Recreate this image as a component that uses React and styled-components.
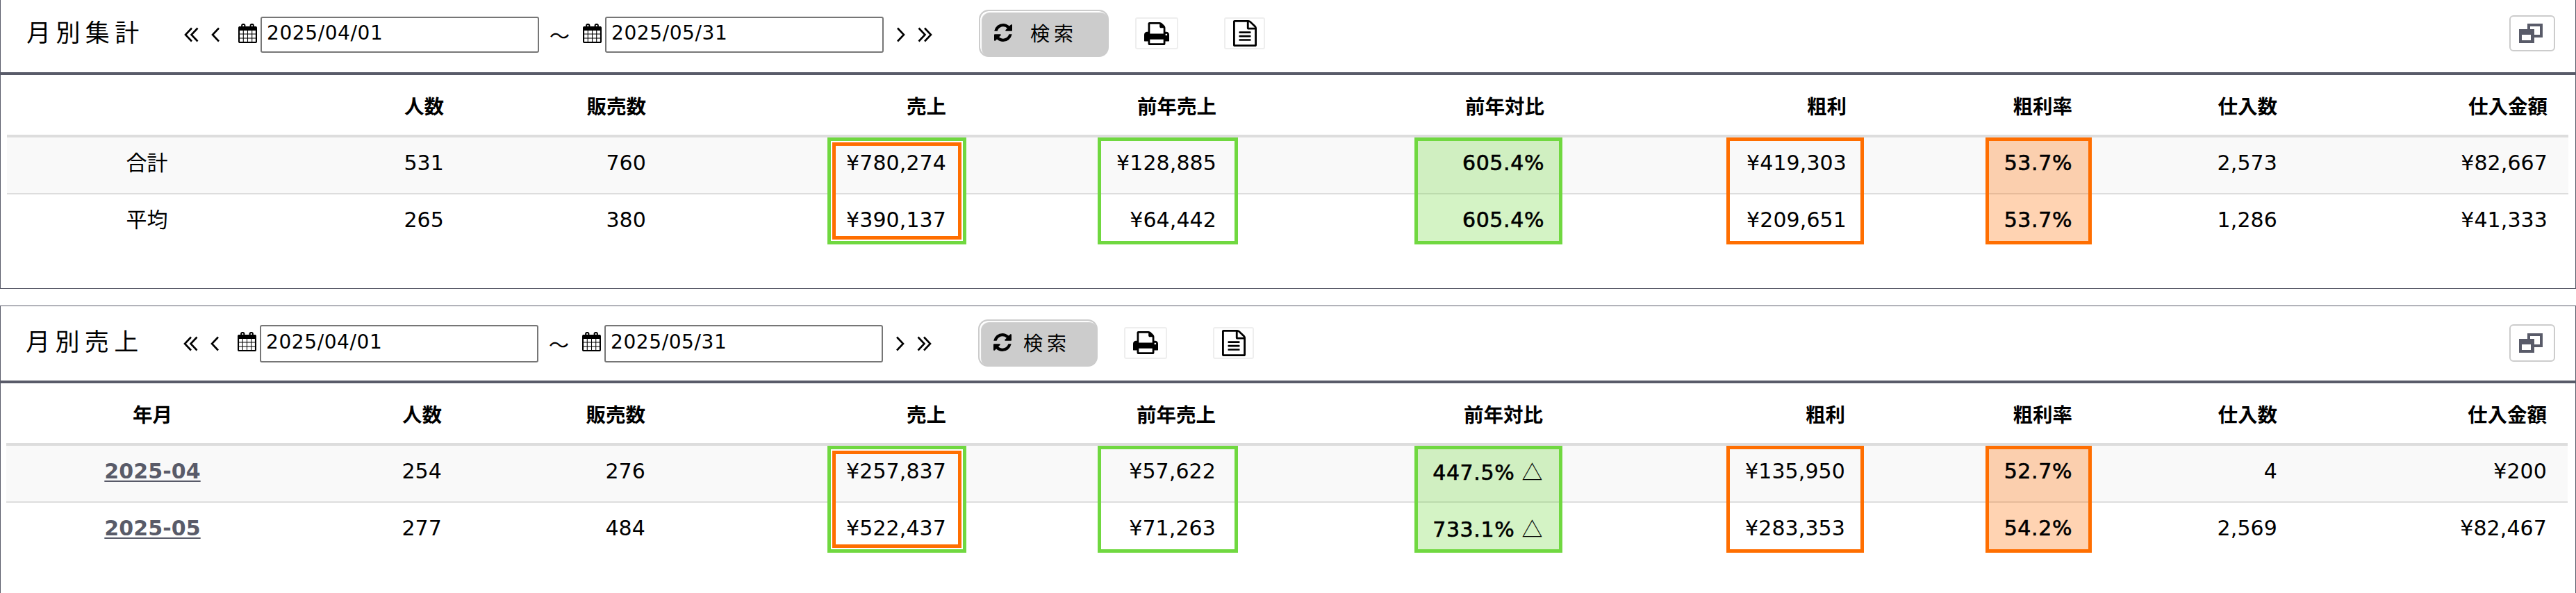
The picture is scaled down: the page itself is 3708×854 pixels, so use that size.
import React from 'react';
import styled, { createGlobalStyle } from 'styled-components';

const GlobalStyle = createGlobalStyle`
  * {
    box-sizing: border-box;
  }

  body {
    margin: 0;
    background: #fff;
    color: #000;
    font-family: 'DejaVu Sans', 'Noto Sans CJK JP', sans-serif;
    overflow: hidden;
  }
`;

const Page = styled.main`
  display: flex;
  flex-direction: column;
  gap: 24px;
  height: 854px;
  overflow: hidden;
`;

const Panel = styled.section`
  flex: none;
  height: ${({ $first }) => ($first ? '416px' : '440px')};
  border: 1px solid #595b69;
  ${({ $first }) => $first && 'border-top: none;'}
`;

const Toolbar = styled.header`
  display: flex;
  align-items: center;
  height: ${({ $first }) => ($first ? '108px' : '111px')};
  padding: 0 29px ${({ $first }) => ($first ? '8px' : '2px')} ${({ $first }) => ($first ? '37px' : '36px')};
  border-bottom: 4px solid #595b69;
`;

const Title = styled.h2`
  flex: none;
  width: 227px;
  margin: 0;
  padding-bottom: 7px;
  font-family: 'Noto Sans CJK JP', sans-serif;
  font-size: 35px;
  font-weight: 400;
  letter-spacing: 7.4px;
  line-height: 40px;
  white-space: nowrap;
`;

const DateGroup = styled.div`
  display: flex;
  align-items: center;
  flex: none;
  margin-top: ${({ $first }) => ($first ? '4px' : '2px')};
`;

const ArrowPair = styled.div`
  display: flex;
  gap: 18px;
  margin: ${({ $after }) => ($after ? '0 0 0 19px' : '0 27px 0 0')};
`;

const DateField = styled.label`
  display: flex;
  align-items: center;
  gap: 5px;

  svg {
    margin-bottom: 5px;
  }
`;

const DateInput = styled.input`
  width: 401px;
  height: ${({ $first }) => ($first ? '52px' : '54px')};
  padding: 0 7px 5px;
  border: 2px solid #767676;
  border-radius: 3px;
  background: #fff;
  color: #000;
  font: 28px 'DejaVu Sans', sans-serif;
  letter-spacing: 0.6px;
  outline: none;
`;

const Tilde = styled.span`
  width: 63px;
  padding-right: 4px;
  font-family: 'Noto Sans CJK JP', sans-serif;
  font-size: 29px;
  line-height: 40px;
  text-align: center;
`;

const SearchButton = styled.button`
  display: flex;
  align-items: center;
  flex: none;
  gap: ${({ $first }) => ($first ? '26px' : '17px')};
  width: ${({ $first }) => ($first ? '187px' : '172px')};
  height: 68px;
  margin-left: 67px;
  padding: 0 0 2px 20px;
  border: 2px solid #ccc;
  border-radius: 14px;
  background: #ccc;
  box-shadow: inset 2px 2px 1px #fff;
  color: #000;
  font-family: 'Noto Sans CJK JP', sans-serif;
  font-size: 28px;
  letter-spacing: 6px;
  line-height: 36px;
  white-space: nowrap;
`;

const ToolButton = styled.button`
  display: flex;
  align-items: center;
  justify-content: center;
  flex: none;
  width: ${({ $width }) => $width}px;
  height: 46px;
  margin-left: ${({ $gap }) => $gap}px;
  padding: 0;
  border: 2px solid #eee;
  border-radius: 3px;
  background: #fff;
  color: #000;
`;

const WindowButton = styled(ToolButton)`
  height: ${({ $first }) => ($first ? '52px' : '54px')};
  margin-left: auto;
  padding-right: 4px;
  border-color: #ccc;
  border-radius: 6px;
`;

const Body = styled.div`
  position: relative;
`;

const Table = styled.table`
  width: 3687px;
  margin-left: ${({ $first }) => ($first ? '9px' : '8px')};
  border-collapse: separate;
  border-spacing: 0;
  table-layout: fixed;
`;

const HeadCell = styled.th`
  height: 90px;
  padding: 1px 30px 0 0;
  border-bottom: 4px solid #ddd;
  font-family: 'Noto Sans CJK JP', sans-serif;
  font-size: 28.5px;
  font-weight: 700;
  line-height: 34px;
  text-align: right;

  &:first-child {
    padding-right: 0;
    text-align: center;
  }
`;

const Row = styled.tr`
  background: ${({ $striped }) => ($striped ? '#f9f9f9' : '#fff')};
`;

const Cell = styled.td`
  height: ${({ $last }) => ($last ? '80px' : '82px')};
  padding: 0 30px 6px 0;
  border-bottom: ${({ $last }) => ($last ? 'none' : '2px solid #ddd')};
  font-size: 30px;
  letter-spacing: 0.1px;
  line-height: 36px;
  text-align: right;
  white-space: nowrap;

  &:first-child {
    padding-right: 0;
    text-align: center;
  }
`;

// Sits above the tinted highlight frames
const Value = styled.span`
  position: relative;
  z-index: 2;
  ${({ $strong }) => $strong && '-webkit-text-stroke: 0.6px #000; letter-spacing: 0.6px;'}
`;

const Triangle = styled.span`
  font-family: 'Noto Sans CJK JP', sans-serif;
  -webkit-text-stroke: 0;
`;

const MonthLink = styled.a`
  color: #595b69;
  font-weight: 700;
  text-decoration: underline;
  text-decoration-thickness: 2px;
  text-underline-offset: 3px;
`;

const Highlight = styled.div`
  position: absolute;
  z-index: 1;
  top: ${({ $inner }) => ($inner ? '97px' : '90px')};
  left: ${({ $left }) => $left}px;
  width: ${({ $width }) => $width}px;
  height: ${({ $inner }) => ($inner ? '140px' : '154px')};
  border: 5px solid ${({ $color }) => ($color === 'green' ? '#70d840' : '#ff6e00')};
  box-shadow: ${({ $inner }) => ($inner ? '0 0 0 2px #fff' : 'none')};
  background: ${({ $fill, $color }) => {
    if (!$fill) return 'transparent';
    return $color === 'green' ? 'rgba(112, 216, 64, 0.3)' : 'rgba(255, 110, 0, 0.3)';
  }};
  background-clip: padding-box;
`;

const highlights = [
  { left: 1190, width: 200, color: 'green' },
  { left: 1197, width: 186, color: 'orange', inner: true },
  { left: 1579, width: 202, color: 'green' },
  { left: 2035, width: 213, color: 'green', fill: true },
  { left: 2484, width: 198, color: 'orange' },
  { left: 2857, width: 153, color: 'orange', fill: true },
];

const headings = ['人数', '販売数', '売上', '前年売上', '前年対比', '粗利', '粗利率', '仕入数', '仕入金額'];

const summary = {
  first: true,
  title: '月別集計',
  columns: [403, 256, 291, 432, 389, 472, 435, 325, 295, 389],
  headings: ['', ...headings],
  rows: [
    ['合計', '531', '760', '¥780,274', '¥128,885', '605.4%', '¥419,303', '53.7%', '2,573', '¥82,667'],
    ['平均', '265', '380', '¥390,137', '¥64,442', '605.4%', '¥209,651', '53.7%', '1,286', '¥41,333'],
  ],
};

const sales = {
  first: false,
  title: '月別売上',
  columns: [421, 236, 293, 433, 388, 471, 435, 327, 295, 388],
  headings: ['年月', ...headings],
  rows: [
    ['2025-04', '254', '276', '¥257,837', '¥57,622', '447.5% △', '¥135,950', '52.7%', '4', '¥200'],
    ['2025-05', '277', '484', '¥522,437', '¥71,263', '733.1% △', '¥283,353', '54.2%', '2,569', '¥82,467'],
  ],
};

const AngleIcon = ({ double, right }) => (
  <svg
    width={double ? 21 : 12}
    height="22"
    viewBox={double ? '0 0 21 22' : '0 0 12 22'}
    fill="none"
    stroke="currentColor"
    strokeWidth="2.6"
    transform={right ? 'scale(-1 1)' : undefined}
  >
    <path d="M11 1.5 2 11l9 9.5" />
    {double && <path d="M19.5 1.5 10.5 11l9 9.5" />}
  </svg>
);

const CalendarIcon = () => (
  <svg width="27" height="28" viewBox="64 0 1664 1792" preserveAspectRatio="none" fill="currentColor">
    <path d="M192 1664h288v-288h-288v288zm352 0h320v-288h-320v288zm-352-352h288v-320h-288v320zm352 0h320v-320h-320v320zm-352-384h288v-288h-288v288zm736 736h320v-288h-320v288zm-384-736h320v-288h-320v288zm768 736h288v-288h-288v288zm-384-352h320v-320h-320v320zm-352-864v-288q0-13-9.5-22.5t-22.5-9.5h-64q-13 0-22.5 9.5t-9.5 22.5v288q0 13 9.5 22.5t22.5 9.5h64q13 0 22.5-9.5t9.5-22.5zm736 864h288v-320h-288v320zm-384-384h320v-288h-320v288zm384 0h288v-288h-288v288zm32-480v-288q0-13-9.5-22.5t-22.5-9.5h-64q-13 0-22.5 9.5t-9.5 22.5v288q0 13 9.5 22.5t22.5 9.5h64q13 0 22.5-9.5t9.5-22.5zm384-64v1280q0 52-38 90t-90 38h-1408q-52 0-90-38t-38-90v-1280q0-52 38-90t90-38h128v-96q0-66 47-113t113-47h64q66 0 113 47t47 113v96h384v-96q0-66 47-113t113-47h64q66 0 113 47t47 113v96h128q52 0 90 38t38 90z" />
    <path d="M128 256h1536v384H128z" />
  </svg>
);

const RefreshIcon = () => (
  <svg width="26" height="26" viewBox="128 128 1536 1536" fill="currentColor">
    <path d="M1639 1056q0 5-1 7-64 268-268 434.5t-478 166.5q-146 0-282.5-55t-243.5-157l-129 129q-19 19-45 19t-45-19-19-45v-448q0-26 19-45t45-19h448q26 0 45 19t19 45-19 45l-137 137q71 66 161 102t187 36q134 0 250-65t186-179q11-17 53-117 8-23 30-23h192q13 0 22.5 9.5t9.5 22.5zm25-800v448q0 26-19 45t-45 19h-448q-26 0-45-19t-19-45 19-45l138-138q-148-137-349-137-134 0-250 65t-186 179q-11 17-53 117-8 23-30 23h-199q-13 0-22.5-9.5t-9.5-22.5v-7q65-268 270-434.5t480-166.5q146 0 284 55.5t245 156.5l130-129q19-19 45-19t45 19 19 45z" />
  </svg>
);

const PrintIcon = () => (
  <svg width="36" height="33" viewBox="64 128 1664 1536" preserveAspectRatio="none" fill="currentColor">
    <path d="M448 1536h896v-256h-896v256zm0-640h896v-384h-160q-40 0-68-28t-28-68v-160h-640v640zm1152 64q0-26-19-45t-45-19-45 19-19 45 19 45 45 19 45-19 19-45zm128 0v416q0 13-9.5 22.5t-22.5 9.5h-224v160q0 40-28 68t-68 28h-960q-40 0-68-28t-28-68v-160h-224q-13 0-22.5-9.5t-9.5-22.5v-416q0-79 56.5-135.5t135.5-56.5h64v-544q0-40 28-68t68-28h672q40 0 88 20t76 48l152 152q28 28 48 76t20 88v256h64q79 0 135.5 56.5t56.5 135.5z" />
  </svg>
);

const FileIcon = () => (
  <svg width="34" height="38" viewBox="128 0 1536 1792" preserveAspectRatio="none" fill="currentColor">
    <path d="M1596 380q28 28 48 76t20 88v1152q0 40-28 68t-68 28h-1344q-40 0-68-28t-28-68v-1600q0-40 28-68t68-28h896q40 0 88 20t76 48zm-444-244v376h376q-10-29-22-41l-313-313q-12-12-41-22zm384 1528v-1024h-416q-40 0-68-28t-28-68v-416h-768v1536h1280zm-1024-864q0-14 9-23t23-9h704q14 0 23 9t9 23v64q0 14-9 23t-23 9h-704q-14 0-23-9t-9-23v-64zm736 224q14 0 23 9t9 23v64q0 14-9 23t-23 9h-704q-14 0-23-9t-9-23v-64q0-14 9-23t23-9h704zm0 256q14 0 23 9t9 23v64q0 14-9 23t-23 9h-704q-14 0-23-9t-9-23v-64q0-14 9-23t23-9h704z" />
  </svg>
);

const WindowsIcon = () => (
  <svg width="34" height="28" viewBox="0 0 34 28" fill="#595b69" fillRule="evenodd">
    <path d="M12 0h22v20H21v-4h9V4H16v4h-4z" />
    <path d="M0 8h22v20H0zM4 16v8h13v-8z" />
  </svg>
);

const renderValue = (text, index) => {
  if (index === 0 && text.startsWith('2025')) {
    return <MonthLink>{text}</MonthLink>;
  }
  if (text.endsWith('△')) {
    return (
      <>
        {text.slice(0, -1)}
        <Triangle>△</Triangle>
      </>
    );
  }
  return text;
};

const ReportPanel = ({ report }) => {
  const { first, title, columns, headings: heads, rows } = report;

  return (
    <Panel $first={first}>
      <Toolbar $first={first}>
        <Title>{title}</Title>
        <DateGroup $first={first}>
          <ArrowPair>
            <AngleIcon double />
            <AngleIcon />
          </ArrowPair>
          <DateField>
            <CalendarIcon />
            <DateInput $first={first} defaultValue="2025/04/01" />
          </DateField>
          <Tilde>～</Tilde>
          <DateField>
            <CalendarIcon />
            <DateInput $first={first} defaultValue="2025/05/31" />
          </DateField>
          <ArrowPair $after>
            <AngleIcon right />
            <AngleIcon double right />
          </ArrowPair>
        </DateGroup>
        <SearchButton $first={first}>
          <RefreshIcon />
          検索
        </SearchButton>
        <ToolButton $width={62} $gap={38}>
          <PrintIcon />
        </ToolButton>
        <ToolButton $width={59} $gap={66}>
          <FileIcon />
        </ToolButton>
        <WindowButton $first={first} $width={66}>
          <WindowsIcon />
        </WindowButton>
      </Toolbar>
      <Body>
        <Table $first={first}>
          <colgroup>
            {columns.map((width, i) => (
              <col key={i} style={{ width }} />
            ))}
          </colgroup>
          <thead>
            <tr>
              {heads.map((label, i) => (
                <HeadCell key={i}>{label}</HeadCell>
              ))}
            </tr>
          </thead>
          <tbody>
            {rows.map((row, r) => (
              <Row key={row[0]} $striped={r === 0}>
                {row.map((text, i) => (
                  <Cell key={i} $last={r === rows.length - 1}>
                    <Value $strong={text.includes('%')}>{renderValue(text, i)}</Value>
                  </Cell>
                ))}
              </Row>
            ))}
          </tbody>
        </Table>
        {highlights.map((h) => (
          <Highlight
            key={h.left}
            $left={h.left}
            $width={h.width}
            $color={h.color}
            $inner={h.inner}
            $fill={h.fill}
          />
        ))}
      </Body>
    </Panel>
  );
};

const App = () => (
  <>
    <GlobalStyle />
    <Page>
      <ReportPanel report={summary} />
      <ReportPanel report={sales} />
    </Page>
  </>
);

export default App;
